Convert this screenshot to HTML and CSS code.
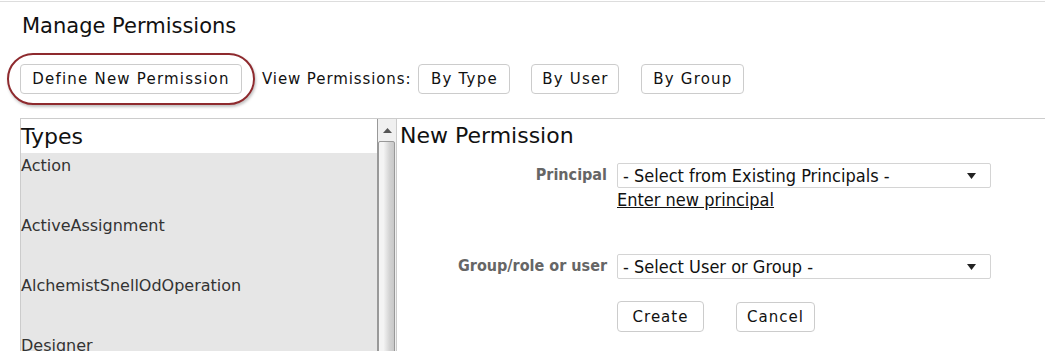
FILE: index.html
```html
<!doctype html>
<html lang="en">
  <head>
    <meta charset="UTF-8" />
    <title>Manage Permissions</title>
    <link rel="stylesheet" href="styles.css">
  </head>
  <body>
    <div class="page">
      <h1 class="page-title">Manage Permissions</h1>
      <div class="toolbar">
        <button class="btn btn-define highlighted">Define New Permission</button>
        <span class="toolbar-label">View Permissions:</span>
        <button class="btn btn-type">By Type</button>
        <button class="btn btn-user">By User</button>
        <button class="btn btn-group">By Group</button>
      </div>

      <div class="main">
        <div class="types-panel">
          <div class="types-list">
            <div class="types-head">Types</div>
            <div class="type-item">Action</div>
            <div class="type-item">ActiveAssignment</div>
            <div class="type-item">AlchemistSnellOdOperation</div>
            <div class="type-item">Designer</div>
          </div>
          <div class="scrollbar">
            <div class="scroll-up">
              <svg width="9" height="5" viewBox="0 0 9 5"><path d="M0 5 L4.5 0 L9 5 Z" fill="#555"/></svg>
            </div>
            <div class="scroll-thumb"></div>
          </div>
        </div>

        <div class="editor">
          <h2 class="editor-title">New Permission</h2>
          <div class="form">
            <label class="form-label">Principal</label>
            <div class="form-field field-principal">
              <div class="select">
                <span>- Select from Existing Principals -</span>
                <svg width="9" height="6" viewBox="0 0 9 6"><path d="M0 0 L9 0 L4.5 6 Z" fill="#222"/></svg>
              </div>
              <a class="link" href="#">Enter new principal</a>
            </div>

            <label class="form-label">Group/role or user</label>
            <div class="form-field field-group">
              <div class="select">
                <span>- Select User or Group -</span>
                <svg width="9" height="6" viewBox="0 0 9 6"><path d="M0 0 L9 0 L4.5 6 Z" fill="#222"/></svg>
              </div>
            </div>

            <div></div>
            <div class="form-actions">
              <button class="btn btn-large btn-create">Create</button>
              <button class="btn btn-large btn-cancel">Cancel</button>
            </div>
          </div>
        </div>
      </div>
    </div>
  </body>
</html>
```

FILE: styles.css
```css
body {
  margin: 0;
  background: #fff;
  font-family: "DejaVu Sans", Verdana, sans-serif;
  color: #111;
  overflow: hidden;
}
.page {
  border-top: 1px solid #ddd;
  margin-top: 1px;
  height: 349px;
  overflow: hidden;
}
.page-title {
  font-size: 21px;
  font-weight: normal;
  margin: 0;
  padding: 12px 0 0 22px;
  line-height: 25px;
}
.toolbar {
  display: flex;
  align-items: center;
  padding: 25px 0 0 20px;
  height: 30px;
}
.btn {
  font-family: "DejaVu Sans", Verdana, sans-serif;
  font-size: 15px;
  letter-spacing: 1.2px;
  color: #111;
  background: #fff;
  border: 1px solid #ccc;
  border-radius: 4px;
  height: 30px;
  padding: 0;
}
.btn-define { width: 222px; margin-right: 20px; }
.btn-type { width: 92px; margin-right: 21px; }
.btn-user { width: 88px; margin-right: 22px; }
.btn-group { width: 103px; }
.highlighted {
  position: relative;
}
/* annotation ring drawn over the button */
.highlighted::after {
  content: "";
  position: absolute;
  top: -12px;
  bottom: -12px;
  left: -14px;
  right: -14px;
  border: 2px solid #8e2a2e;
  border-radius: 26px;
  box-shadow: 1px 2px 3px rgba(0, 0, 0, 0.25);
}
.toolbar-label {
  font-size: 15px;
  letter-spacing: 0.9px;
  margin-right: 7px;
}
.main {
  display: flex;
  margin: 24px 0 0 20px;
  border-top: 1px solid #ccc;
}
.types-panel {
  display: flex;
  width: 375px;
  height: 240px;
  border-left: 1px solid #ccc;
  border-right: 1px solid #ccc;
}
.types-list {
  flex: 1;
  background: #e6e6e6;
  color: #333;
}
.types-head {
  background: #fff;
  color: #111;
  font-size: 22px;
  line-height: 28px;
  height: 34px;
  padding-top: 4px;
  box-sizing: border-box;
}
.type-item {
  font-size: 16px;
  line-height: 20px;
  height: 60px;
  padding-top: 3px;
  box-sizing: border-box;
}
.scrollbar {
  width: 18px;
  background: #f0f0f0;
  border-left: 1px solid #999;
}
.scroll-up {
  height: 22px;
  display: flex;
  justify-content: center;
  align-items: center;
}
.scroll-thumb {
  margin: 0 1px 0 0;
  height: 230px;
  border: 1px solid #999;
  border-radius: 2px;
  background: linear-gradient(to right, #f4f4f4 0%, #f4f4f4 30%, #d4d4d4 70%, #c8c8c8 100%);
}
.editor {
  flex: 1;
  padding-left: 3px;
}
.editor-title {
  font-weight: normal;
  font-size: 22px;
  line-height: 28px;
  margin: 3px 0 0;
}
.form {
  display: grid;
  grid-template-columns: 207px 374px;
  column-gap: 10px;
  margin-top: 13px;
  font-family: "DejaVu Sans Condensed", Tahoma, sans-serif;
}
.form-label {
  text-align: right;
  font-weight: bold;
  font-size: 16px;
  color: #666;
  padding-top: 2px;
}
.form-field {
  display: flex;
  flex-direction: column;
  align-items: flex-start;
}
.field-principal { height: 91px; }
.field-group { height: 47px; }
.select {
  display: flex;
  align-items: center;
  justify-content: space-between;
  box-sizing: border-box;
  width: 374px;
  height: 25px;
  padding: 0 14px 0 5px;
  border: 1px solid #d4d4d4;
  border-radius: 2px;
  font-size: 18px;
  color: #111;
}
.link {
  color: #111;
  font-size: 18px;
  line-height: 22px;
  margin-top: 1px;
}
.form-actions {
  display: flex;
  gap: 32px;
}
.btn-large {
  letter-spacing: 1px;
  height: 31px;
}
.btn-create { width: 87px; }
.btn-cancel { width: 79px; height: 30px; margin-top: 1px; }
```
